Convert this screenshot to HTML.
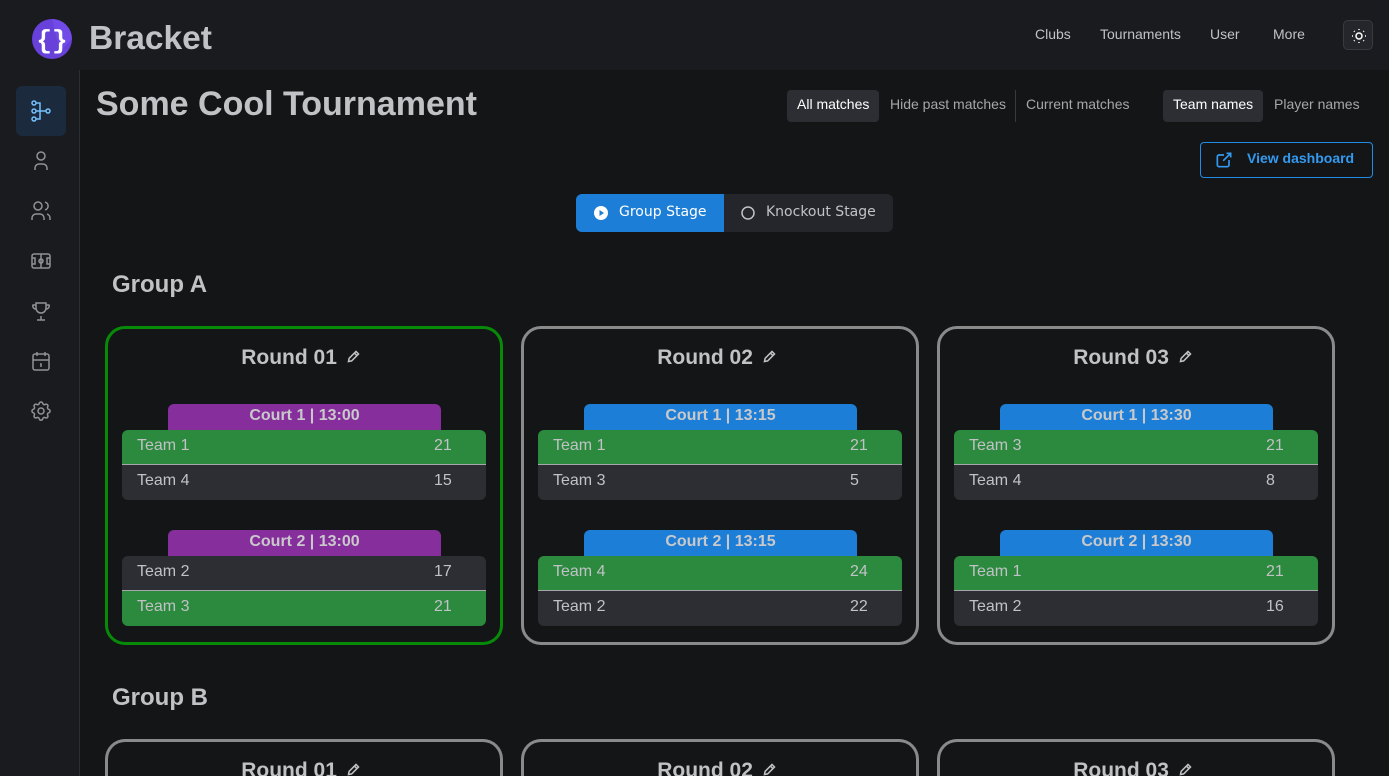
<!DOCTYPE html>
<html style="width:1389px;height:776px;overflow:hidden"><head><meta charset="utf-8"><style>
*{box-sizing:border-box;margin:0;padding:0}
body{width:1389px;height:776px;overflow:hidden;background:#141517;font-family:"Liberation Sans",sans-serif;color:#c1c2c5;position:relative}
.hdr{position:absolute;left:0;top:0;width:1389px;height:70px;background:#1a1b1e}
.side{position:absolute;left:0;top:70px;width:80px;height:706px;background:#1a1b1e;border-right:1px solid #2c2e33}
.abs{position:absolute}
.nav{position:absolute;top:26px;font-size:14px;color:#c1c2c5}
.ico{position:absolute;left:29px;width:24px;height:24px}
.card{position:absolute;width:398px;height:319px;border:3px solid #8a8a8a;border-radius:20px}
.card.g{border-color:#078a07}
.card.s{height:37px;border-bottom:0;border-radius:20px 20px 0 0}
.rt{position:absolute;left:0;right:0;top:16px;text-align:center;font-weight:bold;font-size:21px;line-height:26px;color:#c1c2c5;padding-right:6px}
.rt svg{margin-left:3px}
.ct{position:absolute;left:60px;width:273px;height:26px;border-radius:6px 6px 0 0;text-align:center;font-weight:bold;font-size:16px;line-height:24px;color:#c9c9cc}
.p{background:#862e9c}.b{background:#1c7ed6}
.row{position:absolute;left:14px;width:364px;height:35px;font-size:16px;line-height:32px;padding-left:15px;color:#c1c2c5}
.row span{position:absolute;left:312px}
.w{background:#2b8a3e}.l{background:#2c2e33}
.r1{border-radius:6px 6px 0 0}.r2{border-radius:0 0 6px 6px}
.sep{border-bottom:1px solid #a6a7ab}
.grp{position:absolute;left:112px;font-size:24px;font-weight:bold;color:#c1c2c5}
</style></head><body>
<div class="hdr">
<svg class="abs" style="left:32px;top:19px" width="40" height="40" viewBox="0 0 40 40"><circle cx="20" cy="20" r="20" fill="#6741d9"/><path d="M20 0A20 20 0 0 1 40 20L28 32Z" fill="#7950f2" opacity=".6"/><text x="20" y="29" text-anchor="middle" font-family="Liberation Mono,monospace" font-weight="bold" font-size="26" fill="#fff">{}</text></svg>
<div class="abs" style="left:89px;top:20px;font-size:33.5px;font-weight:bold;color:#c1c2c5">Bracket</div>
<div class="nav" style="left:1035px">Clubs</div>
<div class="nav" style="left:1100px">Tournaments</div>
<div class="nav" style="left:1210px">User</div>
<div class="nav" style="left:1273px">More</div>
<div class="abs" style="left:1343px;top:20px;width:30px;height:30px;border:1px solid #373a40;border-radius:5px;background:#25262b">
<svg class="abs" style="left:7px;top:7px" width="16" height="16" viewBox="0 0 16 16" fill="none" stroke="#fff" stroke-width="1.5"><circle cx="8" cy="8" r="3"/><path d="M8 1v1M8 14v1M1 8h1M14 8h1M3 3l.7.7M12.3 12.3l.7.7M3 13l.7-.7M12.3 3.7l.7-.7"/></svg></div>
</div>
<div class="side">
<div class="abs" style="left:16px;top:16px;width:50px;height:50px;border-radius:6px;background:#1b2a3d"></div>
<svg class="ico" style="top:29px" viewBox="0 0 24 24" fill="none" stroke="#74c0fc" stroke-width="1.5"><circle cx="5" cy="4" r="2"/><circle cx="5" cy="12" r="2"/><circle cx="5" cy="20" r="2"/><circle cx="19" cy="12" r="2"/><path d="M7 4h4v16H7M7 12h10"/></svg>
<svg class="ico" style="top:79px" viewBox="0 0 24 24" fill="none" stroke="#909296" stroke-width="1.5"><circle cx="12" cy="7" r="4"/><path d="M6 21v-2a4 4 0 0 1 4-4h4a4 4 0 0 1 4 4v2"/></svg>
<svg class="ico" style="top:129px" viewBox="0 0 24 24" fill="none" stroke="#909296" stroke-width="1.5"><circle cx="9" cy="7" r="4"/><path d="M3 21v-2a4 4 0 0 1 4-4h4a4 4 0 0 1 4 4v2M16 3.1a4 4 0 0 1 0 7.8M21 21v-2a4 4 0 0 0-3-3.9"/></svg>
<svg class="ico" style="top:179px" viewBox="0 0 24 24" fill="none" stroke="#909296" stroke-width="1.5"><rect x="3" y="5" width="18" height="14" rx="2"/><path d="M12 5v14M3 9h3v6H3M21 9h-3v6h3"/><circle cx="12" cy="12" r="2"/></svg>
<svg class="ico" style="top:229px" viewBox="0 0 24 24" fill="none" stroke="#909296" stroke-width="1.5"><path d="M8 21h8M12 17v4M7 4h10v5a5 5 0 0 1-10 0zM7 6H4a3 3 0 0 0 3 4M17 6h3a3 3 0 0 1-3 4"/></svg>
<svg class="ico" style="top:279px" viewBox="0 0 24 24" fill="none" stroke="#909296" stroke-width="1.5"><rect x="4" y="5" width="16" height="16" rx="2"/><path d="M16 3v4M8 3v4M4 11h16M11 15h1v3"/></svg>
<svg class="ico" style="top:329px" viewBox="0 0 24 24" fill="none" stroke="#909296" stroke-width="1.5"><path d="M10.3 4.3c.4-1.8 3-1.8 3.4 0a1.7 1.7 0 0 0 2.6 1.1c1.5-.9 3.3.8 2.4 2.4a1.7 1.7 0 0 0 1 2.5c1.8.5 1.8 3 0 3.5a1.7 1.7 0 0 0-1 2.5c.9 1.6-.9 3.3-2.4 2.4a1.7 1.7 0 0 0-2.6 1.1c-.4 1.8-3 1.8-3.4 0a1.7 1.7 0 0 0-2.6-1.1c-1.5.9-3.3-.8-2.4-2.4a1.7 1.7 0 0 0-1-2.5c-1.8-.5-1.8-3 0-3.5a1.7 1.7 0 0 0 1-2.5c-.9-1.6.9-3.3 2.4-2.4a1.7 1.7 0 0 0 2.6-1.1z"/><circle cx="12" cy="12" r="3"/></svg>
</div>

<div class="abs" style="left:96px;top:85px;font-size:34px;font-weight:bold;color:#c1c2c5">Some Cool Tournament</div>
<div class="abs" style="left:787px;top:90px;width:92px;height:32px;background:#2c2e33;border-radius:4px"></div>
<div class="abs" style="left:797px;top:96px;font-size:14px;color:#fff">All matches</div>
<div class="abs" style="left:890px;top:96px;font-size:14px;color:#a6a7ab">Hide past matches</div>
<div class="abs" style="left:1015px;top:90px;width:1px;height:32px;background:#373a40"></div>
<div class="abs" style="left:1026px;top:96px;font-size:14px;color:#a6a7ab">Current matches</div>
<div class="abs" style="left:1163px;top:90px;width:100px;height:32px;background:#2c2e33;border-radius:4px"></div>
<div class="abs" style="left:1173px;top:96px;font-size:14px;color:#fff">Team names</div>
<div class="abs" style="left:1274px;top:96px;font-size:14px;color:#a6a7ab">Player names</div>
<div class="abs" style="left:1200px;top:142px;width:173px;height:36px;border:1px solid #228be6;border-radius:4px"></div>
<svg class="abs" style="left:1214px;top:150px" width="20" height="20" viewBox="0 0 24 24" fill="none" stroke="#339af0" stroke-width="2"><path d="M12 6H6a2 2 0 0 0-2 2v10a2 2 0 0 0 2 2h10a2 2 0 0 0 2-2v-6M11 13l9-9M15 4h5v5"/></svg>
<div class="abs" style="left:1247px;top:150px;font-size:14px;font-weight:bold;color:#339af0">View dashboard</div>

<div class="abs" style="left:576px;top:194px;width:317px;height:38px;background:#25262b;border-radius:6px"></div>
<div class="abs" style="left:576px;top:194px;width:148px;height:38px;background:#1c7ed6;border-radius:6px 0 0 6px"></div>
<svg class="abs" style="left:593px;top:205px" width="16" height="16" viewBox="0 0 16 16"><circle cx="8" cy="8" r="7" fill="#fff"/><path d="M6.5 5v6l4.5-3z" fill="#1c7ed6"/></svg>
<div class="abs" style="left:619px;top:204px;font-family:'DejaVu Sans',sans-serif;font-size:14px;color:#fff">Group Stage</div>
<svg class="abs" style="left:740px;top:205px" width="16" height="16" viewBox="0 0 16 16"><circle cx="8" cy="8" r="6" fill="none" stroke="#c1c2c5" stroke-width="1.5"/></svg>
<div class="abs" style="left:766px;top:204px;font-family:'DejaVu Sans',sans-serif;font-size:14px;color:#c1c2c5">Knockout Stage</div>

<div class="grp" style="top:271px">Group A</div>

<div class="card g" style="left:105px;top:326px">
<div class="rt">Round 01 <svg width="15" height="15" viewBox="0 0 24 24" fill="none" stroke="#c1c2c5" stroke-width="2.5"><path d="M4 20l1-5L16 4l4 4L9 19zM13.5 6.5l4 4"/></svg></div>
<div class="ct p" style="top:75px">Court 1 | 13:00</div>
<div class="row w r1 sep" style="top:101px">Team 1<span>21</span></div>
<div class="row l r2" style="top:136px">Team 4<span>15</span></div>
<div class="ct p" style="top:201px">Court 2 | 13:00</div>
<div class="row l r1 sep" style="top:227px">Team 2<span>17</span></div>
<div class="row w r2" style="top:262px">Team 3<span>21</span></div>
</div>
<div class="card" style="left:521px;top:326px">
<div class="rt">Round 02 <svg width="15" height="15" viewBox="0 0 24 24" fill="none" stroke="#c1c2c5" stroke-width="2.5"><path d="M4 20l1-5L16 4l4 4L9 19zM13.5 6.5l4 4"/></svg></div>
<div class="ct b" style="top:75px">Court 1 | 13:15</div>
<div class="row w r1 sep" style="top:101px">Team 1<span>21</span></div>
<div class="row l r2" style="top:136px">Team 3<span>5</span></div>
<div class="ct b" style="top:201px">Court 2 | 13:15</div>
<div class="row w r1 sep" style="top:227px">Team 4<span>24</span></div>
<div class="row l r2" style="top:262px">Team 2<span>22</span></div>
</div>
<div class="card" style="left:937px;top:326px">
<div class="rt">Round 03 <svg width="15" height="15" viewBox="0 0 24 24" fill="none" stroke="#c1c2c5" stroke-width="2.5"><path d="M4 20l1-5L16 4l4 4L9 19zM13.5 6.5l4 4"/></svg></div>
<div class="ct b" style="top:75px">Court 1 | 13:30</div>
<div class="row w r1 sep" style="top:101px">Team 3<span>21</span></div>
<div class="row l r2" style="top:136px">Team 4<span>8</span></div>
<div class="ct b" style="top:201px">Court 2 | 13:30</div>
<div class="row w r1 sep" style="top:227px">Team 1<span>21</span></div>
<div class="row l r2" style="top:262px">Team 2<span>16</span></div>
</div>

<div class="grp" style="top:684px">Group B</div>
<div class="card s" style="left:105px;top:739px">
<div class="rt">Round 01 <svg width="15" height="15" viewBox="0 0 24 24" fill="none" stroke="#c1c2c5" stroke-width="2.5"><path d="M4 20l1-5L16 4l4 4L9 19zM13.5 6.5l4 4"/></svg></div></div>
<div class="card s" style="left:521px;top:739px">
<div class="rt">Round 02 <svg width="15" height="15" viewBox="0 0 24 24" fill="none" stroke="#c1c2c5" stroke-width="2.5"><path d="M4 20l1-5L16 4l4 4L9 19zM13.5 6.5l4 4"/></svg></div></div>
<div class="card s" style="left:937px;top:739px">
<div class="rt">Round 03 <svg width="15" height="15" viewBox="0 0 24 24" fill="none" stroke="#c1c2c5" stroke-width="2.5"><path d="M4 20l1-5L16 4l4 4L9 19zM13.5 6.5l4 4"/></svg></div></div>
</body></html>
